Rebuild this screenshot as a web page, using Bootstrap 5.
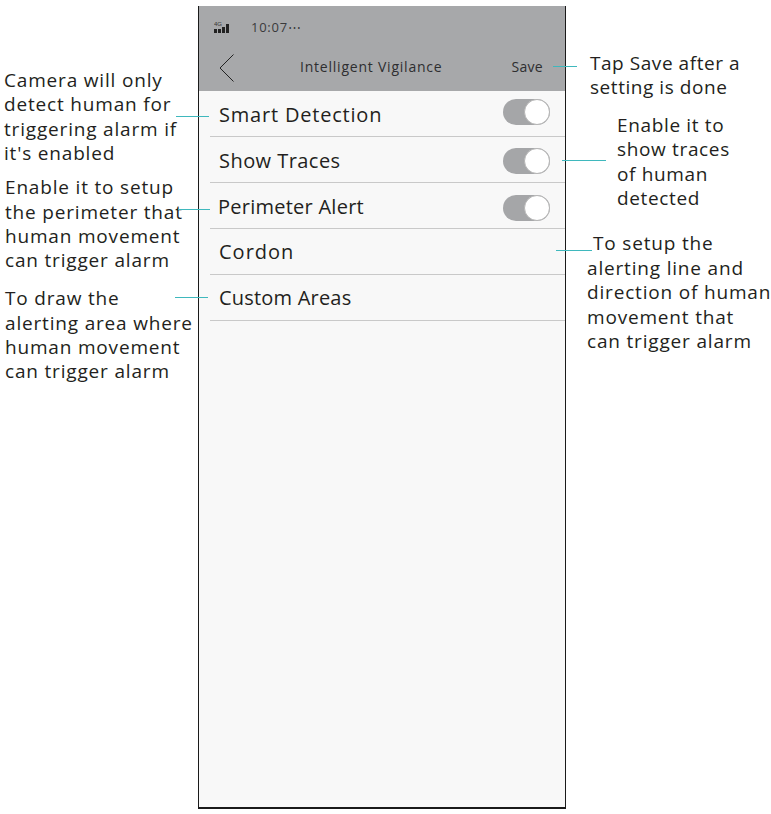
<!DOCTYPE html>
<html lang="en">
<head>
<meta charset="utf-8">
<title>Intelligent Vigilance</title>
<link href="https://cdn.jsdelivr.net/npm/bootstrap@5.3.0/dist/css/bootstrap.min.css" rel="stylesheet">
<style>
html,body{margin:0;height:814px;overflow:hidden;background:#fff}
body{font-family:"Open Sans","Noto Sans",sans-serif;color:#231f20}
.stage{position:relative;width:771px;height:814px}
.side-left{width:198px;flex:none;padding:0 0 0 5px}
.side-right{width:205px;flex:none}
.note{font-size:19px;line-height:24.4px;letter-spacing:.82px;white-space:nowrap;color:#231f20}
.n1{margin-top:68px;margin-left:-1px}
.n2{margin-top:9.5px}
.n3{margin-top:13.5px}
.r1{margin-top:51px;margin-left:24px;letter-spacing:.55px}
.r2{margin-top:13px;margin-left:51px;letter-spacing:.65px}
.r3{margin-top:21px;margin-left:21px}
.r3 span{margin-left:6px}
.phone{width:368px;height:803px;margin-top:6px;flex:none;background:#f8f8f8;border:solid #1a1a1a;border-width:0 1px 2px 1px}
.phone-head{height:85px;background:#a7a8aa}
.status{height:38px;padding-left:15px;padding-top:3px;color:#3a3a3c}
.clock{font-size:13px;letter-spacing:.75px;margin-left:21px;line-height:16px}
.title-bar{height:47px;padding:0 22px 0 20px}
.page-title{font-size:14px;letter-spacing:.78px;font-weight:500;color:#2e2e30;margin-bottom:2px;margin-right:3px}
.save{font-size:14px;letter-spacing:.3px;font-weight:500;color:#2e2e30;margin-bottom:2px}
.row-item{height:46px;margin-left:11px;border-bottom:1px solid #c9c9c9;padding:0 15px 0 9px;font-size:20px;color:#231f20}
.row-item>span:first-child{margin-top:2px}
.row-item.plain>span:first-child{margin-top:0}
.label-a{letter-spacing:.8px}
.label-b{letter-spacing:.45px}
.label-c{letter-spacing:.25px;margin-left:-1px}
.label-d{letter-spacing:1px}
.label-e{letter-spacing:.2px}
.toggle-pill{width:47px;height:26px;border-radius:13px;background:#a5a6a8;position:relative}
.toggle-up{margin-bottom:4px}
.toggle-mid{margin-top:2px}
.toggle-down{margin-top:4px}
.toggle-knob{position:absolute;right:0;top:0;width:26px;height:26px;border-radius:50%;background:#fff;border:1px solid #b5b5b5}
.lead-line{position:absolute;height:1px;background:#3fb8bd}
</style>
</head>
<body>
<div class="stage d-flex">
  <div class="side-left">
    <div class="note n1">Camera will only<br>detect human for<br>triggering alarm if<br>it's enabled</div>
    <div class="note n2">Enable it to setup<br>the perimeter that<br>human movement<br>can trigger alarm</div>
    <div class="note n3">To draw the<br>alerting area where<br>human movement<br>can trigger alarm</div>
  </div>
  <div class="phone">
    <div class="phone-head">
      <div class="status d-flex align-items-center">
        <svg width="16" height="12" viewBox="0 0 16 12" aria-hidden="true"><text x="0" y="5" font-size="6" font-family="Liberation Sans" fill="#333">4G</text><g fill="#222"><rect x="0" y="8" width="3" height="4"/><rect x="4" y="8" width="3" height="4"/><rect x="8" y="6" width="3" height="6"/><rect x="12" y="3" width="3" height="9"/></g></svg>
        <span class="clock">10:07⋯</span>
      </div>
      <div class="title-bar d-flex align-items-center justify-content-between">
        <svg width="15" height="28" viewBox="0 0 15 28" aria-hidden="true"><path d="M14.5 .5 1 14l13.5 13.5" fill="none" stroke="#222" stroke-width="1"/></svg>
        <span class="page-title">Intelligent Vigilance</span>
        <span class="save">Save</span>
      </div>
    </div>
    <div class="row-item d-flex align-items-center justify-content-between"><span class="label-a">Smart Detection</span><span class="toggle-pill toggle-up"><span class="toggle-knob"></span></span></div>
    <div class="row-item d-flex align-items-center justify-content-between"><span class="label-b">Show Traces</span><span class="toggle-pill toggle-mid"><span class="toggle-knob"></span></span></div>
    <div class="row-item d-flex align-items-center justify-content-between"><span class="label-c">Perimeter Alert</span><span class="toggle-pill toggle-down"><span class="toggle-knob"></span></span></div>
    <div class="row-item plain d-flex align-items-center"><span class="label-d">Cordon</span></div>
    <div class="row-item plain d-flex align-items-center"><span class="label-e">Custom Areas</span></div>
  </div>
  <div class="side-right">
    <div class="note r1">Tap Save after a<br>setting is done</div>
    <div class="note r2">Enable it to<br>show traces<br>of human<br>detected</div>
    <div class="note r3"><span>To setup the</span><br>alerting line and<br>direction of human<br>movement that<br>can trigger alarm</div>
  </div>
  <i class="lead-line" style="left:176px;top:116px;width:33px"></i>
  <i class="lead-line" style="left:178px;top:209px;width:32px"></i>
  <i class="lead-line" style="left:175px;top:297px;width:33px"></i>
  <i class="lead-line" style="left:553px;top:66px;width:24px"></i>
  <i class="lead-line" style="left:562px;top:160px;width:44px"></i>
  <i class="lead-line" style="left:556px;top:250px;width:36px"></i>
</div>
</body>
</html>
